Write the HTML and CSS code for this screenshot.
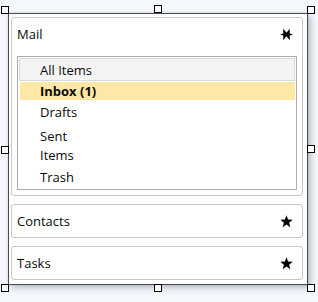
FILE: index.html
```html
<!DOCTYPE html>
<html>
<head>
<meta charset="utf-8">
<link rel="stylesheet" href="styles.css">
</head>
<body>
<div class="stage">
  <div class="surface">
    <section class="panel panel-mail">
      <div class="header">
        <span class="title">Mail</span>
        <svg class="star" width="13" height="13" viewBox="0 0 13 13"><polygon points="13,6.5 9.75,7.42 9.75,12.13 6.5,8.34 3.25,12.13 3.25,7.42 0,6.5 3.25,5.58 3.25,0.87 6.5,4.66 9.75,0.87 9.75,5.58" fill="#000"/></svg>
      </div>
      <div class="listbox">
        <div class="item item-all">All Items</div>
        <div class="item item-selected">Inbox (1)</div>
        <div class="item">Drafts</div>
        <div class="item item-wrap">Sent<br>Items</div>
        <div class="item">Trash</div>
      </div>
    </section>
    <section class="panel panel-small">
      <div class="header">
        <span class="title">Contacts</span>
        <svg class="star" width="13" height="13" viewBox="0 0 13 13"><polygon points="6.5,0.3 8.1,4.6 12.7,4.8 9.1,7.7 10.3,12.2 6.5,9.6 2.7,12.2 3.9,7.7 0.3,4.8 4.9,4.6" fill="#000"/></svg>
      </div>
    </section>
    <section class="panel panel-small">
      <div class="header">
        <span class="title">Tasks</span>
        <svg class="star" width="13" height="13" viewBox="0 0 13 13"><polygon points="6.5,0.3 8.1,4.6 12.7,4.8 9.1,7.7 10.3,12.2 6.5,9.6 2.7,12.2 3.9,7.7 0.3,4.8 4.9,4.6" fill="#000"/></svg>
      </div>
    </section>
  </div>
  <span class="handle h-tl"></span>
  <span class="handle h-tc"></span>
  <span class="handle h-tr"></span>
  <span class="handle h-ml"></span>
  <span class="handle h-mr"></span>
  <span class="handle h-bl"></span>
  <span class="handle h-bc"></span>
  <span class="handle h-br"></span>
</div>
</body>
</html>
```
FILE: styles.css
```css
html, body {
  margin: 0;
  padding: 0;
}
body {
  width: 318px;
  height: 302px;
  background: #f4f7fc;
  font-family: "Open Sans", "Noto Sans", sans-serif;
  font-size: 13px;
  color: #0a0a0a;
  overflow: hidden;
}
.stage {
  position: relative;
  width: 318px;
  height: 302px;
  padding: 13px 0 0 8px;
  box-sizing: border-box;
}
.surface {
  width: 300px;
  height: 272px;
  box-sizing: border-box;
  border: 1px solid #4a4a4a;
  background: #ffffff;
  box-shadow: 3px 3px 6px rgba(40, 50, 80, 0.28), 0 0 3px rgba(40, 50, 80, 0.1);
  padding: 3px 4px 4px 2px;
  display: flex;
  flex-direction: column;
  gap: 8px;
}
.panel {
  box-sizing: border-box;
  border: 1px solid #c8c8c8;
  border-radius: 3px;
  background: #fff;
}
.panel-mail {
  height: 179px;
  display: flex;
  flex-direction: column;
}
.panel-small {
  height: 34px;
  display: flex;
  flex-direction: column;
  justify-content: center;
}
.header {
  height: 32px;
  display: flex;
  align-items: center;
  justify-content: space-between;
  padding: 0 9px 0 5px;
  line-height: 19px;
  flex: none;
}
.star {
  display: block;
}
.listbox {
  margin: 6px 5px 5px 5px;
  flex: 1;
  border: 1px solid #ababab;
  padding: 1px 1px 0 0;
  display: flex;
  flex-direction: column;
}
.item {
  line-height: 19px;
  padding: 3px 0 1px 21px;
  margin: 0 0 0 1px;
  height: 23px;
  box-sizing: border-box;
}
.item-all {
  border: 1px solid #d9d9d9;
  background: #f4f4f4;
  padding: 2px 0 0 20px;
  margin-bottom: 1px;
}
.item-selected {
  background: #ffe8a6;
  font-weight: bold;
  line-height: 18px;
  height: 18px;
  padding: 0 0 0 20px;
  margin-left: 2px;
}
.item-wrap {
  height: 42px;
  padding-top: 4px;
}
.handle {
  position: absolute;
  width: 8px;
  height: 8px;
  box-sizing: border-box;
  border: 1px solid #000;
  background: #fff;
}
.h-tl { left: 1px; top: 6px; }
.h-tc { left: 154px; top: 5px; }
.h-tr { left: 307px; top: 6px; }
.h-ml { left: 1px; top: 146px; }
.h-mr { left: 307px; top: 145px; }
.h-bl { left: 1px; top: 284px; }
.h-bc { left: 154px; top: 284px; }
.h-br { left: 307px; top: 284px; }
```
